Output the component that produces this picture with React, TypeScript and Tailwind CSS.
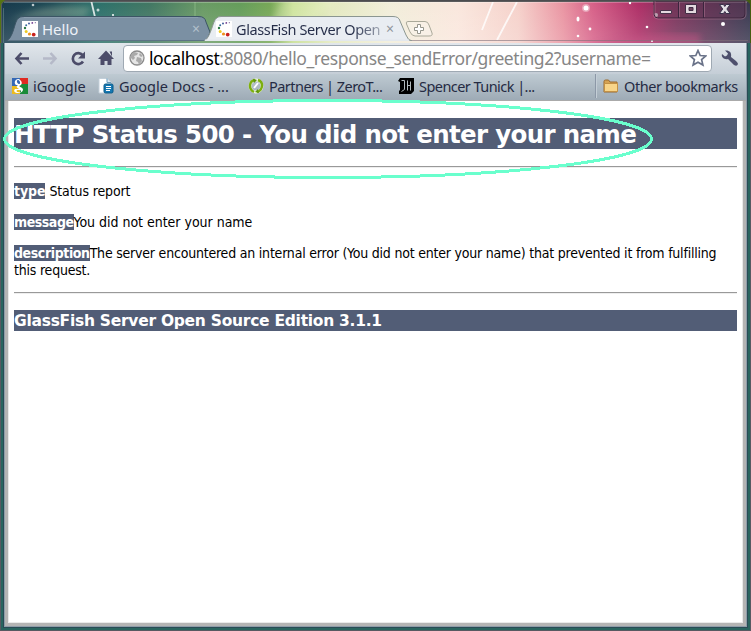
import type { ReactNode } from "react";

const UI = "font-['Noto_Sans','Open_Sans',sans-serif]";
const TAHOMA = "font-['DejaVu_Sans_Condensed','DejaVu_Sans',sans-serif] [font-stretch:condensed]";

function Aurora() {
  return (
    <svg className="absolute inset-0" width="751" height="43" viewBox="0 0 751 43">
      <defs>
        <linearGradient id="sky" gradientUnits="userSpaceOnUse" x1="0" x2="751" y1="0" y2="0">
          <stop offset="0" stopColor="#0f3246" />
          <stop offset=".07" stopColor="#174550" />
          <stop offset=".13" stopColor="#266c66" />
          <stop offset=".2" stopColor="#3c735e" />
          <stop offset=".27" stopColor="#659760" />
          <stop offset=".32" stopColor="#609a55" />
          <stop offset=".36" stopColor="#73a552" />
          <stop offset=".39" stopColor="#c4dc8e" />
          <stop offset=".44" stopColor="#e2e8bd" />
          <stop offset=".52" stopColor="#f1edd9" />
          <stop offset=".61" stopColor="#fae6dc" />
          <stop offset=".69" stopColor="#f5d0c9" />
          <stop offset=".75" stopColor="#e9919f" />
          <stop offset=".79" stopColor="#d55b84" />
          <stop offset=".85" stopColor="#ac2962" />
          <stop offset=".9" stopColor="#762d56" />
          <stop offset="1" stopColor="#303149" />
        </linearGradient>
        <linearGradient id="shade" x2="0" y2="1">
          <stop stopColor="#fff" stopOpacity=".02" />
          <stop offset="1" stopColor="#fff" stopOpacity=".18" />
        </linearGradient>
        <filter id="glow"><feGaussianBlur stdDeviation="3" /></filter>
      </defs>
      <path fill="url(#sky)" d="M0 0h751v43H0z" />
      <path d="M10 20Q45 2 92 7L84 18H24zM265 35L283 0H340L290 35z" fill="#effacb" opacity=".24" filter="url(#glow)" />
      <path d="M590 45Q640 32 700 34v13H590z" fill="#be356e" opacity=".45" filter="url(#glow)" />
      <path fill="url(#shade)" d="M0 0h751v43H0z" />
      <path d="M91 0l4 17M493 2l-11 28M517 2l-20 38" stroke="#fff" strokeWidth="1.8" opacity=".8" />
      <path d="M195 0v17" stroke="#b5e0aa" opacity=".4" />
      <g fill="#fff">
        <circle cx="33" cy="5" r="1.3" opacity=".7" /><circle cx="98" cy="10" r="1.5" opacity=".7" />
        <circle cx="113" cy="15" r="1" /><circle cx="586" cy="8" r="2.500" /><circle cx="586" cy="8" r="4" opacity=".35" />
        <ellipse cx="578" cy="19" rx="1.5" ry="2.5" /><circle cx="590" cy="29" r="1.4" />
        <circle cx="578" cy="36" r="1.3" /><circle cx="630" cy="3" r="1.2" /><circle cx="647" cy="27" r="1.3" />
        <circle cx="656" cy="15" r="2" /><circle cx="723" cy="24" r="2" /><circle cx="652" cy="41" r="1" />
      </g>
      <path d="M0 .5h751" stroke="#4c4c4f" /><path d="M2 1.5h747" stroke="#5b5b5c" />
      <path d="M4 2.5h743" stroke="#fff" opacity=".25" />
      <path d="M0 0h5L1 5v38H0z" fill="#567413" />
      <path d="M746 0h5v43h-1V4z" fill="#455c12" />
      <path d="M1.5 43V5Q2 1 6 1.5" fill="none" stroke="#555b60" />
      <path d="M3.5 43V8" stroke="#67898d" opacity=".6" />
    </svg>
  );
}

function GlassFishIcon() {
  return (
    <svg width="16" height="16" viewBox="0 0 16 16" className="shrink-0">
      <path fill="#fff" d="M0 0h16v16H0z" />
      <circle cx="13.3" cy="1.7" r=".6" fill="#76629a" /><circle cx="10.3" cy="1.9" r=".9" fill="#713d91" />
      <circle cx="7" cy="2.4" r="1" fill="#415b9c" /><circle cx="4.2" cy="4.3" r="1" fill="#386d9c" />
      <circle cx="3" cy="7" r="1.200" fill="#287743" /><circle cx="4.2" cy="10.4" r="1.500" fill="#efcb24" />
      <circle cx="7.5" cy="13" r="1.600" fill="#ed9220" /><circle cx="11.7" cy="13.6" r="1.900" fill="#c9221e" />
    </svg>
  );
}

function Tab({ active, children }: { active?: boolean; children: ReactNode }) {
  return (
    <div className={active ? "relative z-10 -ml-[8px] flex h-[25px] w-[208px] items-center pl-[12px]" : "relative flex h-[25px] w-[208px] items-center pl-[18px]"}>
      <svg className="absolute inset-0" width="208" height="25" viewBox="0 0 208 25">
        <path
          d={active ? "M0 25C5 23 8 11 10 6Q12 .5 17 .5H189Q195 .5 196 5L202 19Q204 24.500 208 25Z" : "M2 25C8 23 10 11 12 6Q14 .5 19 .5H195Q201 .5 202 6L206 16 203 25Z"}
          fill={active ? "#e9edf2" : "#7b90a3"}
          stroke={active ? "#8b9691" : "#3c5565"}
        />
        {active && <path d="M1 24.5H205" stroke="#e3e8ed" strokeWidth="2" />}
        {!active && <path d="M20 1.5H194" stroke="#9aabba" opacity=".5" />}
      </svg>
      <div className="relative flex h-full w-full items-center">{children}</div>
    </div>
  );
}

function WindowControls() {
  return (
    <svg className="absolute top-[1px] left-[653px]" width="94" height="19" viewBox="0 0 94 19">
      <path d="M1 0V13Q1 17 5 17H88Q92 17 92 13V0Z" fill="#653654" fillOpacity=".45" stroke="#3c243d" />
      <path d="M2 0V13Q2 16 5 16M0 4v10q1 4 5 4h83q5 0 5-5V0" fill="none" stroke="#bd8198" opacity=".45" />
      <path d="M25.500 1v16M50.500 1v16" stroke="#3b243d" /><path d="M26.500 1v15M51.500 1v15" stroke="#a26e8a" opacity=".6" />
      <path d="M7.5 9.5h11v3h-11z" fill="#e3d9df" stroke="#47334a" />
      <path d="M32.5 3.500h11v9h-11z" fill="#e3d9df" stroke="#412c45" />
      <path d="M36 6.500h4v3h-4z" fill="#704661" stroke="#412c45" />
      <path d="M66.500 3.500h4l1.300 2 1.300-2h4l-3.200 4.500 3.200 4.500h-4l-1.300-2-1.300 2h-4l3.200-4.500z" fill="#e3dfe5" stroke="#38304a" />
    </svg>
  );
}

function TabStrip() {
  return (
    <div className="relative h-[41px] shrink-0">
      <Aurora />
      <div className="relative flex h-full items-end pl-[4px]">
        <Tab>
          <GlassFishIcon />
          <span className="w-[152px] pl-[4px] text-[15px] leading-[20px] text-[#edf2f8]">Hello</span>
          <span className="pl-[2px] text-[14px] leading-[20px] text-[#b3c0cc]">×</span>
        </Tab>
        <Tab active>
          <GlassFishIcon />
          <span className="w-[150px] bg-gradient-to-r from-[#252d48] from-80% to-[#a9afba] bg-clip-text pl-[4px] text-[14.500px] leading-[20px] whitespace-nowrap text-transparent"><span className="tracking-[-0.38px]">GlassFish Server Open</span></span>
          <span className="pl-[4px] text-[14px] leading-[20px] text-[#8f959b]">×</span>
        </Tab>
        <svg className="mb-[3px] -ml-[8px]" width="30" height="18" viewBox="0 0 30 18">
          <path d="M4 1.5H21Q24 1.5 25 5L28 13Q29 16 25 16H11Q8 16 6 12L2.5 4Q1.500 1.500 4 1.500Z" fill="#fff" fillOpacity=".22" stroke="#aaa99a" />
          <path d="M13.500 4.500h3v3h3v3h-3v3h-3v-3h-3v-3h3z" fill="#fff" stroke="#96968d" />
        </svg>
      </div>
      <WindowControls />
      <span className="absolute bottom-0 left-[409px] h-px w-[339px] bg-[#806f79]/60" />
    </div>
  );
}

function Toolbar() {
  return (
    <div className="flex h-[33px] shrink-0 items-center border-t border-[#f1f4f7] bg-gradient-to-b from-[#e2e7ec] to-[#c5ced7] pr-[8px] pl-[8px]">
      <svg width="110" height="32" viewBox="0 0 110 32" className="shrink-0" fill="none">
        <path d="M8.500 11L3.500 16.500l5 5.500M3.500 16.500h12.500" stroke="#4c4c69" strokeWidth="2.600" />
        <path d="M37.500 11l5 5.500-5 5.500M42.500 16.500H30" stroke="#b5b9c8" strokeWidth="2.600" />
        <path d="M69.500 13A5.500 5.500 0 1 0 70 19.500" stroke="#4c4c69" strokeWidth="2.700" />
        <path d="M72 9.500v7h-7z" fill="#4c4c69" />
        <path d="M93 8.500L101 17h-2.500v6h-4v-4h-3v4h-4v-6H85zM96.500 9.500H99v5z" fill="#4c4c69" />
      </svg>
      <div className="flex h-[27px] w-[589px] shrink-0 items-center rounded-[4px] border border-[#9fa9b3] bg-white pl-[5px]">
        <svg width="16" height="16" viewBox="0 0 16 16" className="shrink-0">
          <circle cx="8" cy="8" r="7" fill="#e5e5e5" stroke="#8b8b8b" strokeWidth="1.300" />
          <path d="M2 5l3-3 4 1-1 2-3 1 1 2-2 2-2-2zM8 7l4 1 1 3-3 4-1-3-2-1zM11 3l3 3-2 1-2-2z" fill="#aaa" />
        </svg>
        <span className="w-[544px] pt-px pl-[4px] text-[17.500px] leading-[25px] whitespace-nowrap text-[#868686]"><span className="tracking-[-0.4px]"><span className="text-black">localhost</span>:8080/hello_response_sendError/greeting2?username=</span></span>
        <svg width="18" height="18" viewBox="0 0 18 18" className="shrink-0">
          <path d="M9 1.500l2.200 5 5.600.5-4.200 3.600 1.300 5.400L9 13.200l-4.900 2.800 1.300-5.400L1.200 7l5.600-.5z" fill="#fff" stroke="#697288" strokeWidth="1.700" />
        </svg>
      </div>
      <svg width="20" height="20" viewBox="0 0 20 20" className="ml-[8px] shrink-0">
        <path d="M5 2.500l3 3-1 2-2 1-3-2.500C1 9 4 12 8 11l6 6q3 2 4-1 0-1-2-3l-5-4c1-5-2-7-6-6.500z" fill="#4e506d" />
      </svg>
    </div>
  );
}

function DocsIcon() {
  return (
    <svg width="16" height="16" viewBox="0 0 16 16">
      <path d="M1 .5h8l4 4V15H1z" fill="#fff" stroke="#c1ced9" /><path d="M9 .5v4h4" fill="#d8e6f1" stroke="#6a99b8" />
      <rect x="6" y="6" width="9" height="9" rx="1.500" fill="#1679b3" stroke="#075887" /><path d="M8 8.500h5M8 10.500h5M8 12.500h4" stroke="#fff" />
    </svg>
  );
}

function Bookmark({ icon, className, children }: { icon: ReactNode; className: string; children: ReactNode }) {
  return (
    <div className={`flex shrink-0 items-center gap-[5px] text-[14.500px] leading-[20px] whitespace-nowrap text-[#252b43] ${className}`}>
      {icon}<span>{children}</span>
    </div>
  );
}

function BookmarkBar() {
  return (
    <div className="flex h-[26px] shrink-0 items-center bg-gradient-to-b from-[#becad2] to-[#9eabb6] pb-[2px] pl-[7px]">
      <Bookmark className="w-[86px]" icon={
        <svg width="16" height="16" viewBox="0 0 16 16">
          <path d="M0 0h8v8H0z" fill="#3568b5" /><path d="M8 0h8v6H8z" fill="#df2a22" /><path d="M7 6h9v10H7z" fill="#188b39" /><path d="M0 8h8v8H0z" fill="#ecbb1e" />
          <path d="M7 1C1 1 2 8 6 7c-3 2 0 3 1 4H3c-4 4 7 6 8 1 0-3-4-3-4-4 4-1 3-5 1-6zM6 2c2 0 3 4 1 4S4 2 6 2zM6 12c5 0 3 3 0 2-2 0-2-2 0-2z" fill="#fff" fillRule="evenodd" />
        </svg>}>iGoogle</Bookmark>
      <Bookmark className="w-[150px]" icon={<DocsIcon />}>Google Docs - ...</Bookmark>
      <Bookmark className="w-[150px] tracking-[-0.54px]" icon={
        <svg width="16" height="16" viewBox="0 0 16 16" fill="none">
          <circle cx="8" cy="8" r="6" stroke="#eff6df" strokeWidth="3" />
          <path d="M6 14C0 11 1 3 7 2M10 2c6 2 5 10-1 12" stroke="#7cae10" strokeWidth="2.500" /><path d="M5 .8l4 1.200-3 3zM11 15l-4-1 3-3z" fill="#5f950b" />
          <path d="M6 10l4-5" stroke="#fff" strokeWidth="2" />
        </svg>}>Partners | ZeroT...</Bookmark>
      <Bookmark className="w-[197px] tracking-[-0.55px]" icon={
        <svg width="16" height="16" viewBox="0 0 16 16">
          <path d="M2 0h14v13l-3 3H1v-3l1-1V4L0 3z" fill="#000" /><path d="M3.500 2.500h3v9l-3 2M9.500 2.500v10M12.500 3.500v9M9.500 7.500h3" fill="none" stroke="#b2babd" />
        </svg>}>Spencer Tunick |...</Bookmark>
      <span className="mr-[6px] h-[24px] w-[2px] border-l border-[#8c98a7] bg-[#c4ced6]" />
      <Bookmark className="tracking-[-0.42px]" icon={
        <svg width="16" height="16" viewBox="0 0 16 16">
          <path d="M1 3.500q0-1.500 1.500-1.500h3L7 4h7v10H1z" fill="#d5a354" stroke="#9c6b2d" /><path d="M1.500 5.500h13v8h-13z" fill="#f8d589" stroke="#c39145" />
        </svg>}>Other bookmarks</Bookmark>
    </div>
  );
}

function Label({ children }: { children: ReactNode }) {
  return <b className="bg-[#525d76] text-white">{children}</b>;
}

function ErrorPage() {
  return (
    <main className={`${TAHOMA} relative mx-[3px] mb-[3px] flex-1 border border-t-0 border-[#eaeaea] bg-white px-[5px] pt-[17px] text-black`}>
      <h1 className="h-[31px] bg-[#525d76] font-['DejaVu_Sans'] text-[24.500px] leading-[33px] font-bold [font-stretch:normal] whitespace-nowrap text-white"><span className="tracking-[-0.670px]">HTTP Status 500 - You did not enter your name</span></h1>
      <hr className="mt-[17px] h-[2px] border-0 border-t border-[#999] bg-[#eee]" />
      <div className="pt-[15px] text-[14px] leading-[17px]">
        <p className="mb-[14px]"><Label><span className="tracking-[-0.1px]">type</span></Label> <span className="tracking-[-0.120px]">Status report</span></p>
        <p className="mb-[14px]"><Label><span className="tracking-[-0.45px]">message</span></Label><span className="tracking-[-0.02px]">You did not enter your name</span></p>
        <p><Label><span className="tracking-[-0.4px]">description</span></Label><span className="tracking-[-0.210px]">The server encountered an internal error (You did not enter your name) that prevented it from fulfilling<br />this request.</span></p>
      </div>
      <hr className="mt-[13px] h-[2px] border-0 border-t border-[#999] bg-[#eee]" />
      <h3 className="mt-[16px] h-[21px] bg-[#525d76] font-['DejaVu_Sans'] text-[15.500px] leading-[22px] font-bold [font-stretch:normal] whitespace-nowrap text-white"><span className="tracking-[-0.270px]">GlassFish Server Open Source Edition 3.1.1</span></h3>
    </main>
  );
}

export default function App() {
  return (
    <div className={`${UI} relative flex h-[631px] w-[751px] flex-col overflow-hidden bg-[#28645f]`}>
      <TabStrip />
      <div className="flex min-h-0 flex-1 border-x border-b border-[#575961]">
        <div className="mx-[2px] mb-[2px] flex min-w-0 flex-1 flex-col border border-t-0 border-[#294b55] bg-[#b4b4b4]">
          <div className="flex flex-1 flex-col border-x border-b border-[#8e9da9]">
            <Toolbar />
            <BookmarkBar />
            <div className="h-px shrink-0 bg-[#aaa]" />
            <ErrorPage />
          </div>
        </div>
      </div>
      <svg className="pointer-events-none absolute inset-0" width="751" height="631" viewBox="0 0 751 631" fill="none">
        <ellipse cx="328" cy="139" rx="323.500" ry="38.500" stroke="#6affcd" strokeWidth="3" shapeRendering="crispEdges" />
      </svg>
    </div>
  );
}
